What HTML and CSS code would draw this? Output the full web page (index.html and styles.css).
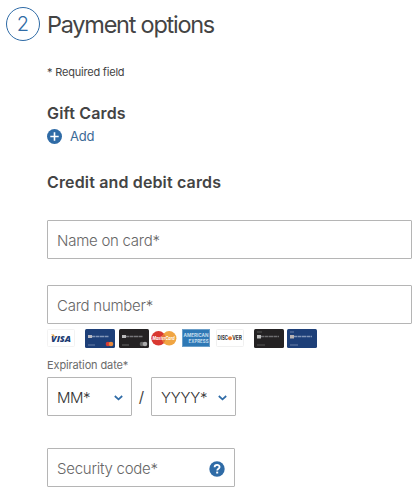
FILE: index.html
```html
<!DOCTYPE html>
<html lang="en">
<head>
    <meta charset="UTF-8">
    <meta name="viewport" content="width=device-width, initial-scale=1.0">
    <title>Payment options</title>
    <link rel="stylesheet" href="styles.css">
</head>
<body>
    <header class="step-header">
        <span class="step-number">2</span>
        <h1>Payment options</h1>
    </header>

    <main class="payment">
        <p class="required">* Required field</p>

        <h2 class="gift-title">Gift Cards</h2>
        <a class="add-link">
            <svg width="15" height="15" viewBox="0 0 15 15">
                <circle cx="7.5" cy="7.5" r="7.5" fill="#2f6ba6"/>
                <path d="M7.5 3.3v8.4M3.3 7.5h8.4" stroke="#fff" stroke-width="1.6"/>
            </svg>
            <span>Add</span>
        </a>

        <h2 class="cards-title">Credit and debit cards</h2>

        <div class="field name-field"><span class="name-label">Name on card*</span></div>
        <div class="field number-field"><span class="number-label">Card number*</span></div>

        <div class="card-logos">
            <svg class="visa" width="28" height="20" viewBox="0 0 28 20">
                <rect x=".5" y=".5" width="27" height="17" rx="1" fill="#fff" stroke="#f3f3f3"/>
                <text x="4" y="12.7" class="visa-text" textLength="20" lengthAdjust="spacingAndGlyphs">VISA</text>
                <path d="M4 5.4h3l.9 3.2z" fill="#e5a13c"/>
            </svg>
            <svg class="blue-mc" width="30" height="20" viewBox="0 0 30 20">
                <rect width="30" height="19" rx="1.5" fill="#1d3f78"/>
                <path d="M6 7.5h18" stroke="#8296b8" stroke-width="1.6" stroke-dasharray="4 .5"/>
                <rect x="3" y="6" width="4" height="3" fill="#b7b9c4"/>
                <path d="M3 16h7" stroke="#6a80a8"/>
                <circle cx="23" cy="15" r="2.3" fill="#d63b35"/>
                <circle cx="26" cy="15" r="2.3" fill="#e98a3b"/>
            </svg>
            <svg class="black-mc" width="30" height="20" viewBox="0 0 30 20">
                <rect width="30" height="19" rx="1.5" fill="#242223"/>
                <path d="M6 7.5h18" stroke="#77777a" stroke-width="1.6" stroke-dasharray="4 .5"/>
                <rect x="3" y="6" width="4" height="3" fill="#bbb"/>
                <path d="M3 16h7" stroke="#666"/>
                <circle cx="23" cy="15" r="2.3" fill="#666"/>
                <circle cx="26" cy="15" r="2.3" fill="#aaa"/>
            </svg>
            <svg class="mastercard" width="26" height="20" viewBox="0 0 26 20">
                <circle cx="7.5" cy="9.3" r="7.2" fill="#d93831"/>
                <circle cx="18.2" cy="9.3" r="7.2" fill="#f0a543"/>
                <path d="M12.8 4.6a7.2 7.2 0 0 1 0 9.4a7.2 7.2 0 0 1 0-9.4" fill="#e5733a"/>
                <text x="1.5" y="11.4" class="mc-text" textLength="22" lengthAdjust="spacingAndGlyphs">MasterCard</text>
            </svg>
            <svg class="amex" width="28" height="20" viewBox="0 0 28 20">
                <rect x=".5" y=".5" width="27" height="17" fill="#2e78b5" stroke="#6b9fc9"/>
                <text x="1.5" y="8.3" class="amex-text" textLength="25" lengthAdjust="spacingAndGlyphs">AMERICAN</text>
                <text x="6.5" y="14.3" class="amex-text" textLength="20" lengthAdjust="spacingAndGlyphs">EXPRESS</text>
            </svg>
            <svg class="discover" width="28" height="20" viewBox="0 0 28 20">
                <rect x=".5" y=".5" width="27" height="17" rx="1" fill="#fff" stroke="#f0f0f0"/>
                <text x="1.5" y="11.2" class="disc-text" textLength="10.5" lengthAdjust="spacingAndGlyphs">DISC</text>
                <circle cx="14" cy="9.2" r="2" fill="#e87a35"/>
                <text x="16.2" y="11.2" class="disc-text" textLength="9.8" lengthAdjust="spacingAndGlyphs">VER</text>
            </svg>
            <svg class="black-card" width="30" height="20" viewBox="0 0 30 20">
                <rect width="30" height="19" rx="1.5" fill="#242223"/>
                <path d="M6 7.5h19" stroke="#6e6e70" stroke-width="1.6" stroke-dasharray="4 .5"/>
                <rect x="3" y="6" width="4" height="3.5" fill="#bbb"/>
                <path d="M3 3h5M3 16h8" stroke="#555"/>
            </svg>
            <svg class="blue-card" width="30" height="20" viewBox="0 0 30 20">
                <rect width="30" height="19" rx="1.5" fill="#1d3f78"/>
                <path d="M6 7.5h19" stroke="#8296b8" stroke-width="1.6" stroke-dasharray="4 .5"/>
                <rect x="3" y="6" width="4" height="3.5" fill="#b9b3b3"/>
                <path d="M3 3h4M3 16h8" stroke="#6a80a8"/>
            </svg>
        </div>

        <p class="expiration">Expiration date*</p>
        <div class="date-row">
            <div class="field select">
                <span class="mm-label">MM*</span>
                <svg width="9" height="6" viewBox="0 0 9 6"><path d="M.8 1l3.7 3.3L8.2 1" fill="none" stroke="#2f6ba6" stroke-width="1.7"/></svg>
            </div>
            <span class="slash">/</span>
            <div class="field select">
                <span class="yyyy-label">YYYY*</span>
                <svg width="9" height="6" viewBox="0 0 9 6"><path d="M.8 1l3.7 3.3L8.2 1" fill="none" stroke="#2f6ba6" stroke-width="1.7"/></svg>
            </div>
        </div>

        <div class="field security">
            <span class="security-label">Security code*</span>
            <svg width="16" height="16" viewBox="0 0 16 16">
                <circle cx="8" cy="8" r="7.7" fill="#2f6ba6"/>
                <path d="M5.6 6.3c0-3.1 5-3.1 5-.2c0 1.7-2.4 1.6-2.4 3.3" fill="none" stroke="#fff" stroke-width="1.8"/>
                <path d="M7.2 10.6h2v1.9h-2z" fill="#fff"/>
            </svg>
        </div>
    </main>
</body>
</html>
```

FILE: styles.css
```css
* {
    margin: 0;
    padding: 0;
    box-sizing: border-box;
}

body {
    font-family: Inter, "Liberation Sans", sans-serif;
    background-color: #fff;
    color: #444;
    height: 490px;
    overflow: hidden;
}

/* Step heading */
.step-header {
    display: flex;
    align-items: center;
    gap: 7px;
    height: 34px;
    margin: 7px 0 0 6px;
}

.step-number {
    width: 34px;
    height: 34px;
    border: 1px solid #2f6ba6;
    border-radius: 50%;
    color: #2f6ba6;
    font-size: 20px;
    font-weight: 300;
    line-height: 33px;
    text-align: center;
}

h1 {
    padding-top: 2px;
    font-size: 23.5px;
    font-weight: 400;
    letter-spacing: -1.25px;
    line-height: 34px;
    white-space: nowrap;
}

.payment {
    width: 365px;
    margin-left: 47px;
}

.required {
    margin-top: 23px;
    font-size: 11px;
    letter-spacing: -0.2px;
    line-height: 16px;
}

h2 {
    font-size: 16px;
    font-weight: 600;
    letter-spacing: 0.15px;
    line-height: 20px;
}

.gift-title {
    margin-top: 23px;
}

.add-link {
    display: flex;
    align-items: center;
    gap: 8px;
    height: 20px;
    margin-top: 3px;
    color: #3b6a96;
    font-size: 13px;
    letter-spacing: -0.2px;
}

.cards-title {
    margin-top: 26px;
}

/* Fields */
.field {
    display: flex;
    align-items: center;
    height: 39px;
    padding-left: 9px;
    border: 1px solid #b5b5b5;
    border-radius: 1px;
    color: #666;
    font-size: 15px;
    font-weight: 300;
    letter-spacing: -0.25px;
    padding-top: 2px;
    white-space: nowrap;
}

.name-field {
    margin-top: 28px;
}

.number-field {
    margin-top: 26px;
}

/* Accepted cards */
.card-logos {
    display: flex;
    height: 20px;
    margin-top: 5px;
}

.card-logos svg {
    flex: none;
    overflow: visible;
}

.visa {
    margin-right: 10px;
}

.blue-mc {
    margin-right: 4px;
}

.black-mc {
    margin-right: 2px;
}

.mastercard {
    margin-right: 5px;
}

.amex {
    margin-right: 6px;
}

.discover {
    margin-right: 10px;
}

.black-card {
    margin-right: 3px;
}

.visa-text {
    font: italic 800 9.5px "Open Sans", sans-serif;
    fill: #1d3c73;
}

.mc-text {
    font: italic 700 5px Inter, sans-serif;
    fill: #fff;
}

.amex-text {
    font: 700 5px Inter, sans-serif;
    fill: #c3dced;
}

.disc-text {
    font: 700 5.5px Inter, sans-serif;
    fill: #333;
}

.expiration {
    margin-top: 8px;
    color: #6b6b6b;
    font-size: 11px;
    letter-spacing: -0.12px;
    line-height: 16px;
}

.date-row {
    display: flex;
    align-items: center;
    margin-top: 4px;
}

.select {
    width: 85px;
    justify-content: space-between;
    padding-right: 8px;
    color: #333;
}

.mm-label {
    letter-spacing: -0.5px;
}

.slash {
    width: 19px;
    font-size: 15px;
    text-align: center;
}

.security {
    width: 188px;
    margin-top: 32px;
    justify-content: space-between;
    padding-right: 9px;
}
```
